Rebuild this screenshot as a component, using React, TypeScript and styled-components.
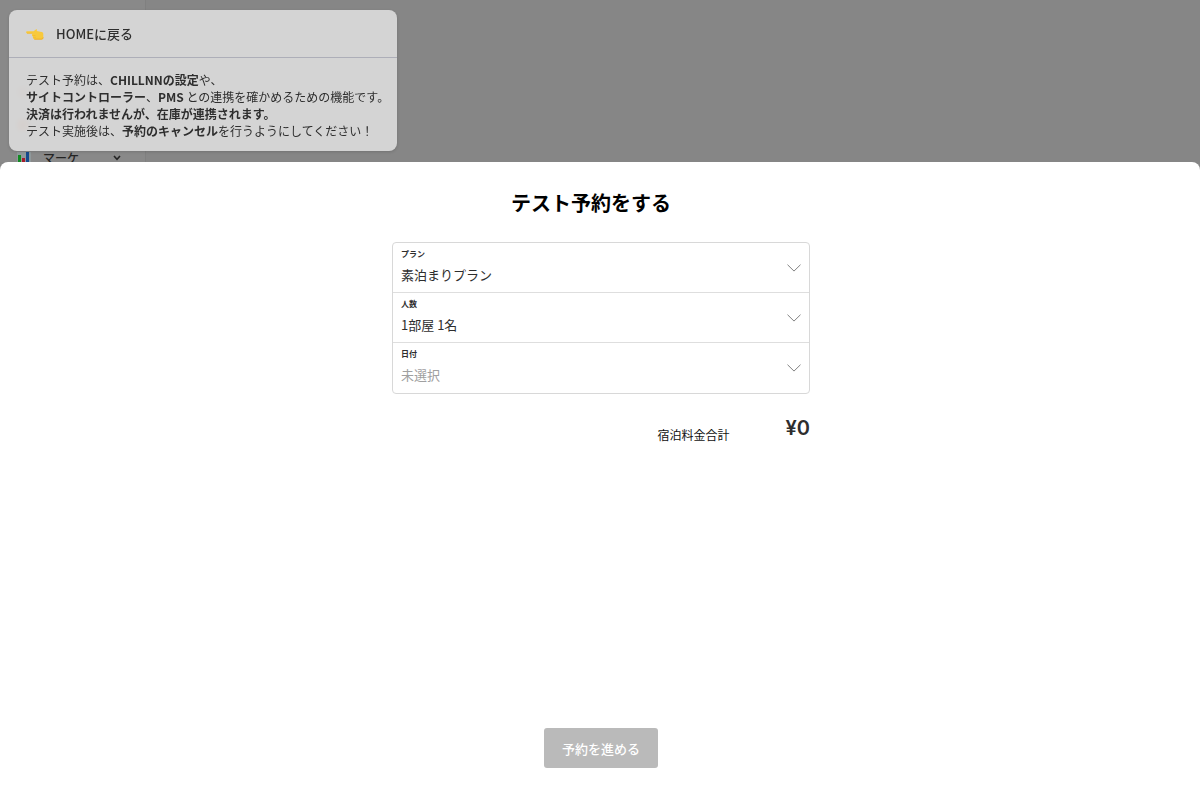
import React from "react";
import styled, { createGlobalStyle } from "styled-components";

const GlobalStyle = createGlobalStyle`
  *, *::before, *::after { box-sizing: border-box; }
  body {
    margin: 0;
    background: #868686;
    font-family: "Noto Sans CJK JP", "Noto Sans", sans-serif;
    color: #2e2e2e;
  }
  button, select { font-family: inherit; }
`;

const Page = styled.div`
  min-height: 100vh;
  display: flex;
  flex-direction: column;
`;

const Backdrop = styled.div`
  position: relative;
  height: 20vh;
  min-height: 162px;
  display: flex;
`;

const Sidebar = styled.nav`
  width: 146px;
  background: #898989;
  border-right: 1px solid #808080;
  padding: 0 24px 0 17px;
  overflow: hidden;
  display: flex;
  flex-direction: column;
  justify-content: flex-end;
  gap: 15px;
`;

const SidebarIcon = styled.span<{ $color: string }>`
  flex: none;
  width: 12px;
  height: 12px;
  margin: 3px 0;
  border-radius: 4px;
  background: ${({ $color }) => $color};
`;

const SidebarItem = styled.button`
  display: flex;
  align-items: center;
  gap: 12px;
  width: 100%;
  height: 18px;
  margin-bottom: -5px;
  padding: 0;
  border: 0;
  background: none;
  color: #242424;
  font-size: 12px;
  line-height: 18px;
  font-weight: 500;
  text-align: left;

  span { flex: 1; }
`;

const Notice = styled.aside`
  position: absolute;
  top: 10px;
  left: 9px;
  width: 388px;
  max-width: calc(100% - 18px);
  border-radius: 8px;
  background: rgba(226, 226, 226, 0.85);
  backdrop-filter: blur(2px);
  box-shadow: 0 1px 3px rgba(0, 0, 0, 0.15);
  overflow: hidden;
`;

const BackLink = styled.a`
  display: flex;
  align-items: center;
  gap: 12px;
  height: 48px;
  padding: 0 17px;
  border-bottom: 1px solid #adaeb8;
  color: #2e2e2e;
  font-size: 13px;
  font-weight: 500;
  text-decoration: none;
`;

const NoticeText = styled.p`
  margin: 0;
  padding: 13px 0 12px 17px;
  font-size: 12px;
  line-height: 17px;
  white-space: nowrap;

  b { font-weight: 700; }
`;

const Sheet = styled.main`
  flex: 1;
  display: flex;
  flex-direction: column;
  align-items: center;
  padding: 26px 16px 41px 18px;
  background: #fff;
  border-radius: 8px 8px 0 0;
`;

const Title = styled.h1`
  margin: 0 0 24px;
  padding-right: 20px;
  color: #000;
  font-size: 20px;
  line-height: 30px;
  font-weight: 700;
`;

const Form = styled.form`
  flex: 1;
  width: 100%;
  display: flex;
  flex-direction: column;
  align-items: center;
`;

const Fields = styled.div`
  width: 100%;
  max-width: 418px;
  border: 1px solid #d8d8d8;
  border-radius: 4px;
`;

const Field = styled.div`
  display: grid;
  grid-template-columns: 1fr 14px;
  grid-template-rows: 14px 28px;
  height: 50px;
  padding: 4px 8px 0;
  border-bottom: 1px solid #dedede;

  &:last-child { border-bottom: 0; }

  svg {
    grid-area: 1 / 2 / 3 / 3;
    align-self: center;
    pointer-events: none;
  }
`;

const Label = styled.label`
  grid-area: 1 / 1 / 2 / 3;
  font-size: 8px;
  line-height: 14px;
  font-weight: 700;
`;

const Select = styled.select<{ $empty?: boolean }>`
  grid-area: 2 / 1 / 3 / 3;
  appearance: none;
  width: 100%;
  height: 28px;
  padding: 0;
  border: 0;
  background: none;
  color: ${({ $empty }) => ($empty ? "#a0a0a0" : "#2e2e2e")};
  font-size: 13px;
  line-height: 28px;
`;

const Total = styled.div`
  width: 100%;
  max-width: 418px;
  margin-top: 22px;
  display: flex;
  justify-content: flex-end;
  align-items: flex-end;
  gap: 56px;
`;

const TotalLabel = styled.span`
  color: #111;
  font-size: 12px;
  line-height: 18px;
`;

const TotalAmount = styled.strong`
  padding-bottom: 4px;
  font-family: Inter, sans-serif;
  font-size: 20px;
  line-height: 24px;
  font-weight: 600;
`;

const Submit = styled.button`
  width: 114px;
  height: 40px;
  margin-top: auto;
  padding: 0;
  border: 0;
  border-radius: 3px;
  background: #bababa;
  color: #fff;
  font-size: 13px;
  font-weight: 500;
`;

const Chevron = () => (
  <svg width="14" height="8" viewBox="0 0 14 8" fill="none" stroke="#808080" aria-hidden="true">
    <path d="M0.5 0.7L7 7.1L13.5 0.7" />
  </svg>
);

const PointingHand = () => (
  <svg width="18" height="12" viewBox="0 0 18 12" aria-hidden="true">
    <path
      d="M1.2 3.2H7.6L9.9 1.4C10.6 0.9 11.5 1.5 11 2.3L10.6 3L15.8 4C16.8 4.3 17.3 4.8 17.3 5.8V9.4C17.3 10.8 16.5 11.4 15.3 11.4H9.3C7.8 11.4 6.9 10.7 6.9 9.6V8.5C6 8.1 5.7 7.3 6.1 6.5L6.5 5.4H1.2C-0.2 5.4 -0.2 3.2 1.2 3.2Z"
      fill="#f8c93c"
    />
    <path d="M1 5.3H6.5M6.9 7.5H9.4M7.4 9.4H9.8" fill="none" stroke="#f0b52c" strokeWidth="0.6" />
    <path d="M8.2 11.2H15.3C16.5 11.2 17.2 10.5 17.2 9.4" fill="none" stroke="#eda823" strokeWidth="0.8" />
  </svg>
);

const BarChart = () => (
  <svg width="14" height="14" viewBox="0 0 14 14" aria-hidden="true">
    <path fill="#90999b" d="M0 1H14V14H0Z" />
    <path fill="#118a21" d="M1 4H4V14H1Z" />
    <path fill="#a51c2c" d="M5 7H8V14H5Z" />
    <path fill="#164b8e" d="M9 1H12V14H9Z" />
  </svg>
);

const fields = [
  { id: "plan", label: "プラン", value: "素泊まりプラン" },
  { id: "guests", label: "人数", value: "1部屋 1名" },
  { id: "date", label: "日付", value: "未選択", empty: true },
];

export default function App() {
  return (
    <Page>
      <GlobalStyle />
      <Backdrop>
        <Sidebar>
          <SidebarIcon $color="#857a76" />
          <SidebarIcon $color="#8a6f60" />
          <SidebarItem type="button">
            <BarChart />
            <span>マーケ</span>
            <svg width="8" height="6" viewBox="0 0 8 6" fill="none" stroke="#242424" strokeWidth="1.6" aria-hidden="true">
              <path d="M1 1L4 4.3L7 1" />
            </svg>
          </SidebarItem>
        </Sidebar>
        <Notice>
          <BackLink href="#home">
            <PointingHand />
            HOMEに戻る
          </BackLink>
          <NoticeText>
            テスト予約は、<b>CHILLNNの設定</b>や、
            <br />
            <b>サイトコントローラー</b>、<b>PMS</b> との連携を確かめるための機能です。
            <br />
            <b>決済は行われませんが、在庫が連携されます。</b>
            <br />
            テスト実施後は、<b>予約のキャンセル</b>を行うようにしてください！
          </NoticeText>
        </Notice>
      </Backdrop>
      <Sheet>
        <Title>テスト予約をする</Title>
        <Form onSubmit={(event) => event.preventDefault()}>
          <Fields>
            {fields.map(({ id, label, value, empty }) => (
              <Field key={id}>
                <Label htmlFor={id}>{label}</Label>
                <Select id={id} $empty={empty}>
                  <option>{value}</option>
                </Select>
                <Chevron />
              </Field>
            ))}
          </Fields>
          <Total>
            <TotalLabel>宿泊料金合計</TotalLabel>
            <TotalAmount>¥0</TotalAmount>
          </Total>
          <Submit type="submit" disabled>
            予約を進める
          </Submit>
        </Form>
      </Sheet>
    </Page>
  );
}
